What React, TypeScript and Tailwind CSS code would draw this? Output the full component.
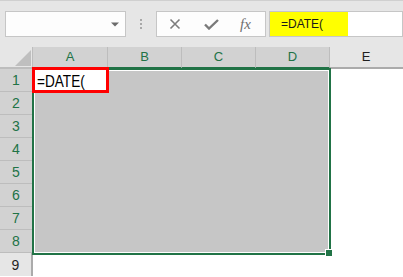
const cols = ['A', 'B', 'C', 'D'];
const rows = [1, 2, 3, 4, 5, 6, 7, 8];

const label = { fontFamily: '"Liberation Sans", Arial, sans-serif' };

export default function App() {
  return (
    <div className="w-[403px] h-[277px] overflow-hidden bg-white" style={label}>
      {/* formula bar strip */}
      <div className="h-[47px] border-t border-[#d0d0d0] bg-[#e6e6e6] flex items-start pt-[10px] pl-[5px]">
        <div className="w-[121px] h-[26px] border border-[#c6c6c6] bg-[#fdfdfd] flex items-center justify-end pr-[6px]">
          <svg width="8" height="5" viewBox="0 0 8 5">
            <path d="M0 0.5h8L4 4.5z" fill="#6b6b6b" />
          </svg>
        </div>
        <div className="w-[30px] h-[26px] flex flex-col items-center justify-center gap-[2px]">
          <span className="w-[2px] h-[2px] bg-[#a8a8a8]" />
          <span className="w-[2px] h-[2px] bg-[#a8a8a8]" />
          <span className="w-[2px] h-[2px] bg-[#a8a8a8]" />
        </div>
        <div className="w-[110px] h-[26px] border border-[#c6c6c6] bg-[#fdfdfd] flex items-center pl-[12px]">
          <svg width="12" height="12" viewBox="0 0 12 12">
            <path d="M1.5 1.5l9 9M10.5 1.5l-9 9" stroke="#7d7d7d" strokeWidth="1.6" fill="none" />
          </svg>
          <svg width="15" height="11" viewBox="0 0 15 11" className="ml-[23px]">
            <path d="M1 5.5l4 4L14 1" stroke="#7a7a7a" strokeWidth="2.4" fill="none" />
          </svg>
          <span
            className="ml-[21px] text-[15px] italic text-[#6f6f6f] leading-none"
            style={{ fontFamily: '"Liberation Serif", serif' }}
          >
            fx
          </span>
        </div>
        <div className="flex-1 ml-[3px] h-[26px] border border-[#c6c6c6] bg-white flex">
          <div className="w-[78px] bg-[#ffff00] pl-[11px] pt-[5px] text-[12px] leading-[14px] text-[#1a1a1a]">=DATE(</div>
        </div>
      </div>

      {/* sheet */}
      <div className="grid grid-cols-[33px_75px_74px_74px_74px_1fr] grid-rows-[22px_repeat(9,23px)] text-[13px]">
        <div className="bg-[#e6e6e6] border-r border-b-2 border-[#bdbdbd] flex items-end justify-end pr-[1px] pb-[1px]">
          <svg width="16" height="16" viewBox="0 0 16 16">
            <path d="M16 0V16H0z" fill="#bfbfbf" />
          </svg>
        </div>
        {cols.map((c) => (
          <div
            key={c}
            className="bg-[#d2d2d2] border-r border-[#bdbdbd] border-b-2 border-b-[#217346] flex items-center justify-center text-[#217346] leading-[20px]"
          >
            {c}
          </div>
        ))}
        <div className="bg-[#e6e6e6] border-b-2 border-[#ababab] flex items-center justify-center text-[#1f1f1f] leading-[20px] pr-[1px]">
          E
        </div>

        {rows.map((r) => (
          <div
            key={r}
            style={{ gridRow: r + 1 }}
            className="col-start-1 bg-[#d2d2d2] border-b border-r border-[#bdbdbd] flex items-center justify-center text-[#217346] text-[14px] pt-[1px]"
          >
            {r}
          </div>
        ))}
        <div className="col-start-1 row-start-10 bg-[#e6e6e6] border-r-2 border-[#ababab] flex items-center justify-center text-[#1f1f1f] text-[14px] pt-[1px]">
          9
        </div>

        {/* selected range A1:D8 */}
        <div className="col-start-2 col-end-6 row-start-2 row-end-10 -ml-px -mt-px -mr-px -mb-[2px] relative border-2 border-[#217346]">
          <div className="h-full border border-white bg-[#c6c6c6]" />
          <div className="absolute left-[-2px] top-[-3px] w-[77px] h-[26px] border-[3px] border-[#ff0000] bg-white pl-[2px] pt-[2px] text-[17px] leading-[20px] text-black">
            <span className="inline-block origin-left scale-x-[0.8]">=DATE(</span>
          </div>
          <div className="absolute -right-[4px] -bottom-[4px] w-[8px] h-[8px] border border-white bg-[#217346]" />
        </div>
      </div>
    </div>
  );
}
